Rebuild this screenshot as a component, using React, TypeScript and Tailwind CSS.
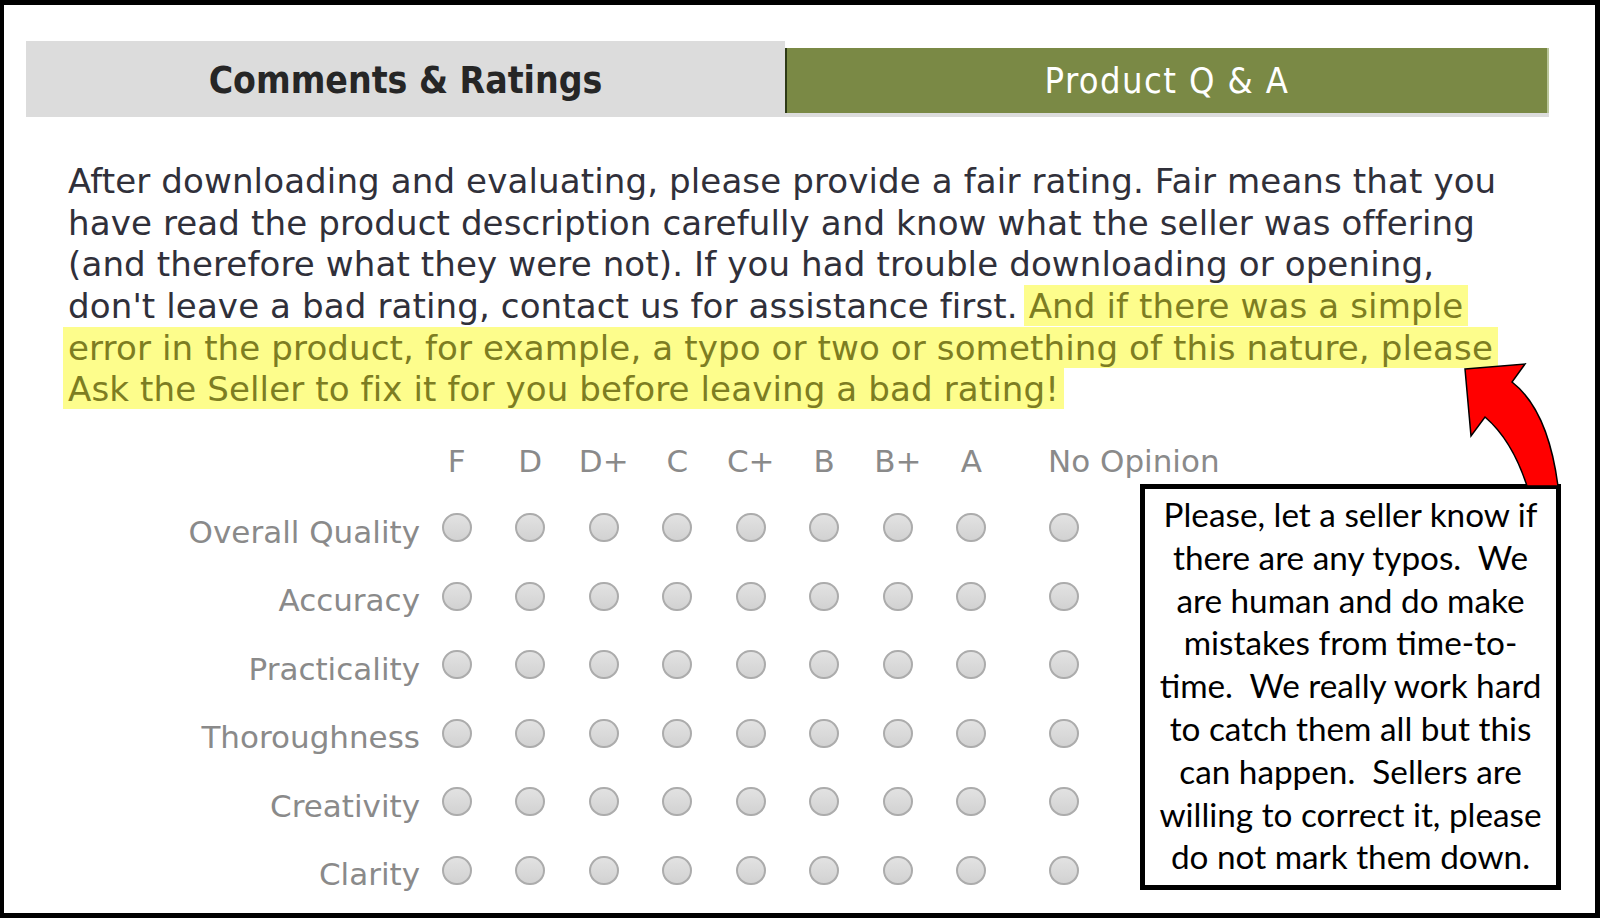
import type { ReactNode } from "react";

const grades = ["F", "D", "D+", "C", "C+", "B", "B+", "A"];
const criteria = [
  "Overall Quality",
  "Accuracy",
  "Practicality",
  "Thoroughness",
  "Creativity",
  "Clarity",
];

const calloutLines = [
  "Please, let a seller know if",
  "there are any typos.  We",
  "are human and do make",
  "mistakes from time-to-",
  "time.  We really work hard",
  "to catch them all but this",
  "can happen.  Sellers are",
  "willing to correct it, please",
  "do not mark them down.",
];

function Radio({ name, label }: { name: string; label: string }) {
  return (
    <input
      type="radio"
      name={name}
      aria-label={label}
      className="appearance-none block w-[30px] h-[29px] rounded-full border-2 border-[#acacac] bg-linear-to-b from-[#e2e2e2] to-[#d2d2d2] m-0"
    />
  );
}

function Mark({ children }: { children: ReactNode }) {
  return (
    <span className="bg-[#fdfd8c] text-[#7d7d22] px-[5px] -mx-[5px] py-[0.5px] box-decoration-clone">
      {children}
    </span>
  );
}

export default function App() {
  return (
    <div className="relative w-[1600px] h-[918px] bg-white border-black border-t-[5px] border-l-[4px] border-r-[5px] border-b-[5px] overflow-hidden">
      {/* tabs */}
      <div className="flex pt-[36px] pl-[22px]">
        <div className="w-[759px] h-[76px] pt-[4px] bg-[#dcdcdc] flex items-center justify-center font-['DejaVu_Sans_Condensed','DejaVu_Sans',sans-serif] font-bold text-[37px] text-[#262626]">
          Comments &amp; Ratings
        </div>
        <div className="mt-[7px] w-[764px] flex flex-col">
          <div className="h-[65px] bg-[#7a8945] border-l-2 border-[#2e3a16] border-r-2 border-r-[#b9c59a] flex items-center justify-center font-['DejaVu_Sans_Condensed','DejaVu_Sans',sans-serif] text-[36px] tracking-[1.4px] text-white">
            Product Q &amp; A
          </div>
          <div className="h-[4px] bg-[#dcdcdc]" />
        </div>
      </div>

      {/* intro text */}
      <p className="mt-[44px] pl-[64px] whitespace-nowrap font-['DejaVu_Sans',sans-serif] text-[34.1px] tracking-[0.1px] leading-[41.6px] text-[#30303a]">
        After downloading and evaluating, please provide a fair rating. Fair means that you
        <br />
        have read the product description carefully and know what the seller was offering
        <br />
        (and therefore what they were not). If you had trouble downloading or opening,
        <br />
        don't leave a bad rating, contact us for assistance first.{" "}
        <Mark>
          And if there was a simple
          <br />
          error in the product, for example, a typo or two or something of this nature, please
          <br />
          Ask the Seller to fix it for you before leaving a bad rating!
        </Mark>
      </p>

      {/* rating grid */}
      <div className="mt-[19px] font-['DejaVu_Sans',sans-serif] text-[31px] text-[#8a8a8a]">
        <div className="flex items-center h-[64px]">
          <div className="w-[416px]" />
          {grades.map((g) => (
            <div key={g} className="w-[73.5px] text-center">
              {g}
            </div>
          ))}
          <div className="pl-[40px] whitespace-nowrap">No Opinion</div>
        </div>
        {criteria.map((c) => (
          <div key={c} className="flex items-center h-[68.5px]">
            <div className="w-[416px] text-right pt-[9px] leading-none">{c}</div>
            {grades.map((g) => (
              <div key={g} className="w-[73.5px] flex justify-center">
                <Radio name={c} label={`${c} ${g}`} />
              </div>
            ))}
            <div className="pl-[40.5px]">
              <Radio name={c} label={`${c} No Opinion`} />
            </div>
          </div>
        ))}
      </div>

      {/* annotation callout */}
      <div className="absolute left-[1136px] top-[479px] w-[421px] h-[406px] border-[5px] border-black bg-white pt-[4px] font-['Lato',sans-serif] text-[33.3px] leading-[42.8px] text-black text-center whitespace-pre">
        {calloutLines.map((l) => (
          <div key={l}>{l}</div>
        ))}
      </div>

      <svg
        className="absolute left-[1451px] top-[350px]"
        width="115"
        height="140"
        viewBox="1455 355 115 140"
        aria-hidden
      >
        <path
          d="M1465 369 L1525 364 L1512 382 Q1548 410 1558 486 L1527 486 Q1512 440 1485 417 L1471 436 Z"
          fill="#ff0000"
          stroke="#000"
          strokeWidth="1.5"
          strokeLinejoin="miter"
        />
      </svg>
    </div>
  );
}
